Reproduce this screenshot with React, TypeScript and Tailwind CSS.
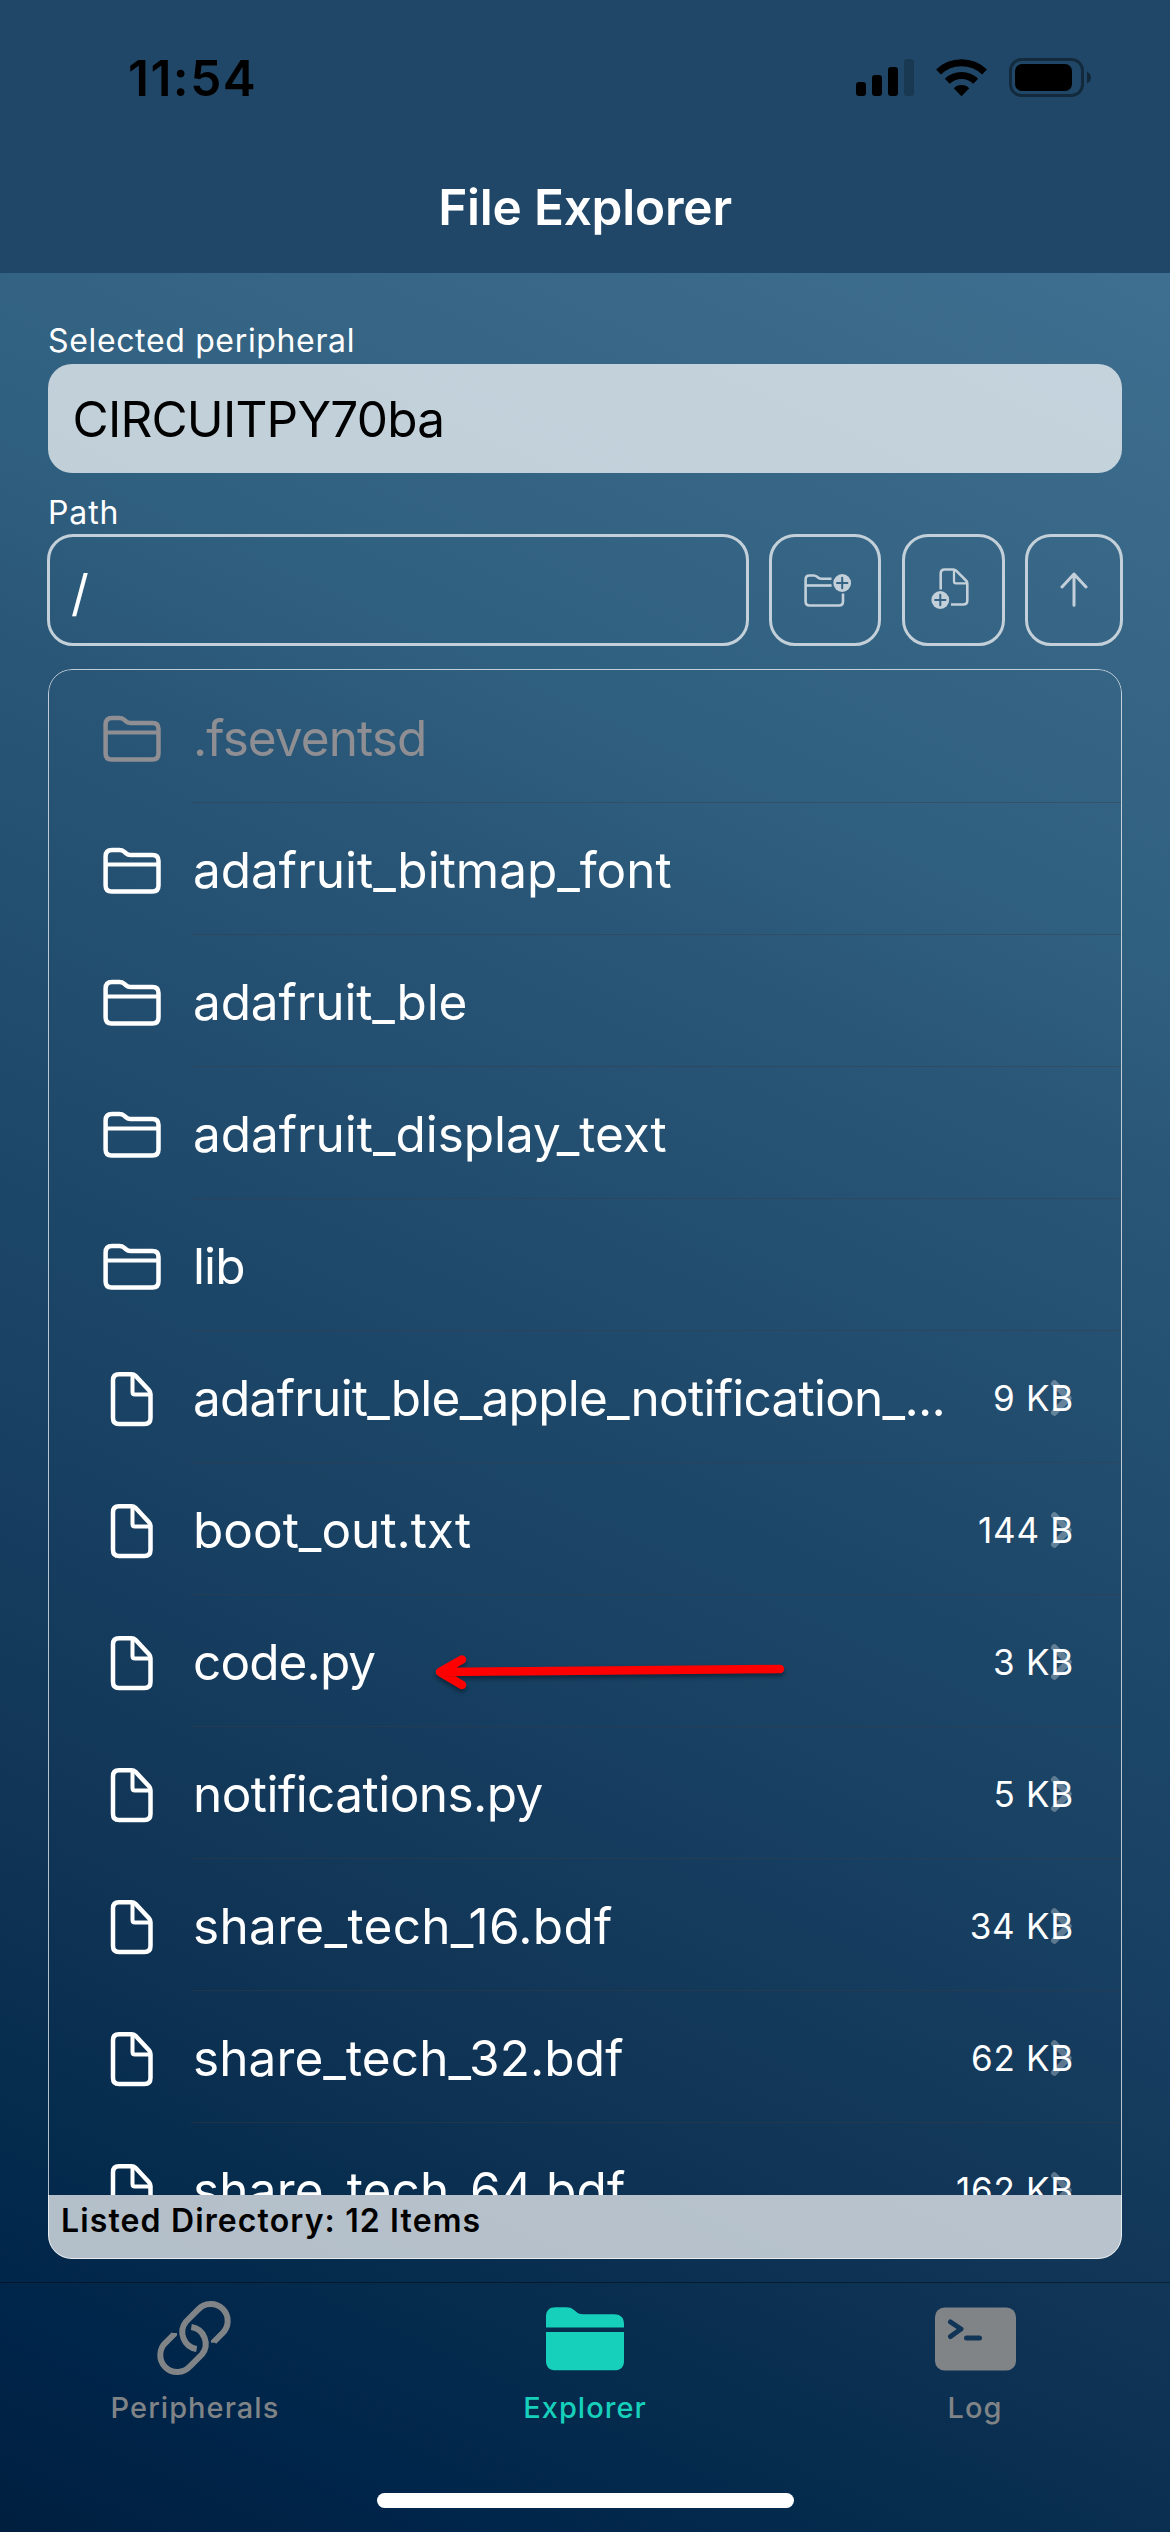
import type { ReactNode } from 'react';

type Entry = { name: string; kind: 'folder' | 'file'; size?: string; muted?: boolean; tracking: string };

const entries: Entry[] = [
  { name: '.fseventsd', kind: 'folder', muted: true, tracking: 'tracking-[-0.92px]' },
  { name: 'adafruit_bitmap_font', kind: 'folder', tracking: 'tracking-[-0.02px]' },
  { name: 'adafruit_ble', kind: 'folder', tracking: 'tracking-[-0.12px]' },
  { name: 'adafruit_display_text', kind: 'folder', tracking: 'tracking-[-0.05px]' },
  { name: 'lib', kind: 'folder', tracking: 'tracking-[-0.9px]' },
  { name: 'adafruit_ble_apple_notification_...', kind: 'file', size: '9 KB', tracking: 'tracking-[-0.75px]' },
  { name: 'boot_out.txt', kind: 'file', size: '144 B', tracking: 'tracking-[0px]' },
  { name: 'code.py', kind: 'file', size: '3 KB', tracking: 'tracking-[-0.9px]' },
  { name: 'notifications.py', kind: 'file', size: '5 KB', tracking: 'tracking-[-0.55px]' },
  { name: 'share_tech_16.bdf', kind: 'file', size: '34 KB', tracking: 'tracking-[0.33px]' },
  { name: 'share_tech_32.bdf', kind: 'file', size: '62 KB', tracking: 'tracking-[0.1px]' },
  { name: 'share_tech_64.bdf', kind: 'file', size: '162 KB', tracking: 'tracking-[0.2px]' },
];

function FolderIcon() {
  return (
    <svg width="58" height="48" viewBox="0 0 58 48" fill="none" stroke="currentColor" strokeWidth="4.500" strokeLinejoin="round">
      <path d="M2.600 9.500C2.600 5 5 3 9 3h7.200c2.200 0 3.600.5 5.200 1.900l1.500 1.300c1.500 1.300 2.500 1.800 4.600 1.800H49.500c4 0 6 2.200 6 6v24.500c0 4-2 6-6 6H8.600c-4 0-6-2-6-6z" />
      <path d="M2.600 17.500H55" strokeWidth="4" />
    </svg>
  );
}

function FileIcon() {
  return (
    <svg width="44" height="56" viewBox="0 0 44 56" fill="none" stroke="currentColor" strokeWidth="4.500" strokeLinejoin="round">
      <path d="M9 3.200h12.500c1.800 0 2.800.4 4 1.600L39 19.300c1.200 1.300 1.500 2.300 1.500 4V47c0 4-2 6-6 6H9c-4 0-6-2-6-6V9.200c0-4 2-6 6-6z" />
      <path d="M22.500 4v17c0 1.800.8 2.500 2.500 2.500h15" strokeWidth="4" />
    </svg>
  );
}

function FolderPlusIcon() {
  return (
    <svg width="48" height="36" viewBox="0 0 48 36" fill="none" stroke="currentColor" strokeWidth="2.600">
      <path d="M27.500 6.800H17.500c-1.500 0-2.200-.3-3.200-1.100l-1.200-1C12 3.800 11.200 3.500 9.700 3.500H5.500C3 3.500 1.600 4.900 1.600 7.500v22c0 2.700 1.400 4 4 4H35c2.600 0 4-1.300 4-4V21.500" />
      <path d="M1.600 13.500h26" />
      <circle cx="38.200" cy="11" r="8.900" fill="currentColor" stroke="none" />
      <path d="M38.200 5.800v10.400M33 11h10.400" stroke="#356384" strokeWidth="2" strokeLinecap="round" />
    </svg>
  );
}

function FilePlusIcon() {
  return (
    <svg width="38" height="42" viewBox="0 0 38 42" fill="none" stroke="currentColor" strokeWidth="2.600" strokeLinejoin="round">
      <path d="M9.700 21.500V5.500c0-2.700 1.300-4 4-4h8.500c1.300 0 2 .3 2.900 1.200L35 12.500c1 1 1.300 1.700 1.300 3V32.500c0 2.700-1.300 4-4 4H20" />
      <path d="M23 2v11.500c0 1.300.5 1.800 1.800 1.800h11.500" strokeWidth="2.300" />
      <circle cx="9.300" cy="32" r="8.900" fill="currentColor" stroke="none" />
      <path d="M9.300 26.800v10.400M4.100 32h10.400" stroke="#356384" strokeWidth="2" strokeLinecap="round" />
    </svg>
  );
}

function UpIcon() {
  return (
    <svg width="28" height="36" viewBox="0 0 28 36" fill="none" stroke="currentColor" strokeWidth="3" strokeLinecap="round" strokeLinejoin="round">
      <path d="M14 33.200V2M2 15 14 2l12 13" />
    </svg>
  );
}

function LinkIcon() {
  return (
    <svg width="130" height="100" viewBox="0 0 390 300" fill="none" stroke="currentColor" strokeWidth="18">
      <path d="M252 161V158L276 134A51 51 0 1 0 204 62L168 98A51 51 0 0 0 200 180" />
      <path d="M132 132V136L108 160A51 51 0 1 0 180 232L216 196A51 51 0 0 0 184 114" />
    </svg>
  );
}

function ExplorerIcon() {
  return (
    <svg width="78" height="64" viewBox="0 0 78 64" fill="currentColor">
      <path d="M0 20.500V10C0 3.500 3.300.3 9.800.3H20c3.500 0 5.500.7 8 2.700l2.200 1.800C32.300 6.600 34 7.200 37 7.200h31C74.500 7.200 78 10.500 78 17v3.500z" />
      <path d="M0 25h78v29c0 6-3.300 9.300-9.800 9.300H9.800C3.300 63.300 0 60 0 54z" />
    </svg>
  );
}

function TerminalIcon() {
  return (
    <svg width="81" height="64" viewBox="0 0 81 64" fill="none">
      <rect x="0" y="0.500" width="81" height="63" rx="9.500" fill="currentColor" />
      <path d="M15.500 15 26 22l-10.500 7.500M31.500 31h13" stroke="#103556" strokeWidth="5" strokeLinecap="round" strokeLinejoin="round" />
    </svg>
  );
}

function StatusIcons() {
  return (
    <svg width="270" height="68" viewBox="0 0 270 68">
      <rect x="16" y="38" width="10" height="14" rx="3" />
      <rect x="32" y="31" width="10" height="21" rx="3" />
      <rect x="48" y="23" width="10" height="29" rx="3" />
      <rect x="64" y="15" width="10" height="37" rx="3" fillOpacity="0.2" />
      <path d="M121.500 52.300 113.800 44.200a11 11 0 0 1 15.400 0z" />
      <g fill="none" stroke="#000" strokeWidth="7">
        <path d="M107.300 37.300a20.500 20.500 0 0 1 28.400 0" />
        <path d="M98.500 28a33.500 33.500 0 0 1 46 0" />
      </g>
      <rect x="170.500" y="15.500" width="72" height="36" rx="11" fill="none" stroke="#000" strokeOpacity="0.4" strokeWidth="3" />
      <rect x="175" y="20" width="57" height="27" rx="7" />
      <path d="M247 27.500c5.300 2.500 5.300 9.500 0 12z" fillOpacity="0.45" />
    </svg>
  );
}

function PathButton({ className, children }: { className: string; children: ReactNode }) {
  return (
    <button className={`flex h-[112px] items-center justify-center rounded-[26px] border-3 border-[#c3d0d9] text-[#c3d0d9] ${className}`}>
      {children}
    </button>
  );
}

function Row({ entry }: { entry: Entry }) {
  return (
    <li className={`flex h-[132px] shrink-0 pl-[49px] ${entry.muted ? 'text-[#8e8e93]' : 'text-white'}`}>
      <div className="flex w-[94px] items-center pt-[3px]">
        <span className="flex w-[70px] justify-center">{entry.kind === 'folder' ? <FolderIcon /> : <FileIcon />}</span>
      </div>
      <div className="flex flex-1 items-center border-b border-[#3c3c43]/40 pl-[2px] pr-[48px] pt-[3px]">
        <span className={`whitespace-pre text-[49.5px] leading-[60px] ${entry.tracking}`}>{entry.name}</span>
        {entry.size && (
          <span className="relative ml-auto text-[35px] leading-[42px] tracking-[0.75px]">
            <svg className="absolute right-[1px] top-[2px]" width="23" height="38" viewBox="0 0 23 38" fill="none" stroke="#fff" strokeOpacity="0.3" strokeWidth="6.500" strokeLinecap="round" strokeLinejoin="round">
              <path d="M4.300 4.500 18.300 19l-14 14.500" />
            </svg>
            <span className="relative">{entry.size}</span>
          </span>
        )}
      </div>
    </li>
  );
}

function Tab({ label, color, children }: { label: string; color: string; children: ReactNode }) {
  return (
    <div className={`flex w-[390px] flex-col items-center ${color}`}>
      <div className="flex h-[111px] items-center justify-center pt-px">{children}</div>
      <span className="text-[29px] font-medium leading-[28px] tracking-[1.05px]">{label}</span>
    </div>
  );
}

export default function App() {
  return (
    <div className="relative flex h-[2532px] w-[1170px] flex-col overflow-hidden bg-[linear-gradient(24.8deg,#001f3f_0%,#00254a_7%,#052b4d_14%,#103455_23%,#173f61_35%,#1f4a6b_48%,#285475_60%,#306080_69%,#366585_78%,#3f6f90_91%,#437394_100%)] font-[Inter,sans-serif]">
      <header className="h-[273px] shrink-0 bg-[#204767]">
        <div className="flex h-[156px] items-center justify-between pl-[128px] pr-[60px]">
          <span className="text-[49.5px] font-semibold leading-[60px] tracking-[1.5px] text-black">11:54</span>
          <StatusIcons />
        </div>
        <h1 className="mt-[21px] text-center text-[49.5px] font-semibold leading-[60px] tracking-[-0.2px] text-white">File Explorer</h1>
      </header>

      <main className="flex flex-1 flex-col px-[48px]">
        <div className="mt-[48px] h-[43px] text-[32px] leading-[40px] tracking-[0.65px] text-white">Selected peripheral</div>
        <div className="flex h-[109px] items-center rounded-[24px] bg-white/70 pl-[24.500px] pt-px text-[49.5px] tracking-[-0.78px] text-black">
          CIRCUITPY70ba
        </div>
        <div className="mt-[20px] h-[41px] text-[32px] leading-[40px] tracking-[0.9px] text-white">Path</div>
        <div className="-mx-[1px] flex h-[112px] justify-between">
          <div className="flex h-[112px] w-[702px] items-center rounded-[26px] border-3 border-[#c3d0d9] pl-[21px] pt-[6px] text-[49.5px] text-white">/</div>
          <PathButton className="w-[112px] pl-[5px]"><FolderPlusIcon /></PathButton>
          <PathButton className="w-[103px] pb-[3px] pr-[6px]"><FilePlusIcon /></PathButton>
          <PathButton className="w-[98px]"><UpIcon /></PathButton>
        </div>

        <section className="relative mt-[23px] flex h-[1590px] flex-col overflow-hidden rounded-[24px]">
          <ul className="mt-[2px] flex h-[1524px] flex-col overflow-hidden">
            {entries.map((entry) => (
              <Row key={entry.name} entry={entry} />
            ))}
          </ul>
          <div className="h-[64px] bg-white/70 pl-[13px] pt-[6px] text-[32px] font-semibold leading-[40px] tracking-[1.13px] text-black">
            Listed Directory: 12 Items
          </div>
          <div className="pointer-events-none absolute inset-0 rounded-[24px] border border-white/70" />
        </section>
      </main>

      <nav className="flex h-[250px] shrink-0 border-t border-black/40">
        <Tab label="Peripherals" color="text-[#808487]"><LinkIcon /></Tab>
        <Tab label="Explorer" color="text-[#16d0bb]"><ExplorerIcon /></Tab>
        <Tab label="Log" color="text-[#808487]"><TerminalIcon /></Tab>
      </nav>

      <svg className="absolute left-[428px] top-[1646px] drop-shadow-[0_3px_2px_rgba(0,0,0,0.4)]" width="368" height="52" viewBox="0 0 368 52" fill="none" stroke="#ff0000" strokeWidth="8.500" strokeLinecap="round" strokeLinejoin="round">
        <path d="M12 26 352 23M34 13.500 12 26l22 13" />
      </svg>
      <div className="absolute left-[377px] top-[2493px] h-[15px] w-[417px] rounded-full bg-white" />
    </div>
  );
}
